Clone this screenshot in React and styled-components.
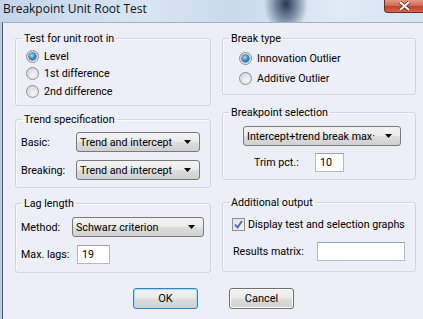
import styled, { createGlobalStyle } from "styled-components";

const GlobalStyle = createGlobalStyle`
  html, body {
    margin: 0;
    padding: 0;
  }
  body {
    width: 423px;
    height: 319px;
    overflow: hidden;
    background: #eceef8;
    font-family: Roboto, "Liberation Sans", sans-serif;
    font-size: 10.7px;
    color: #000;
  }
`;

const Window = styled.div`
  width: 423px;
  height: 319px;
  display: flex;
  flex-direction: column;
  background: linear-gradient(90deg, #b9cbe2 0%, #d3e1f1 50%, #dbe7f4 100%);
`;

const TitleBar = styled.div`
  height: 22px;
  flex: none;
  display: flex;
  align-items: flex-start;
  justify-content: space-between;
  background-color: #d3e1f1;
  background-image: radial-gradient(
      22px 30px at 286px 4px,
      rgba(30, 46, 72, 0.95) 0%,
      rgba(60, 80, 110, 0.6) 50%,
      rgba(60, 80, 110, 0) 100%
    ),
    linear-gradient(90deg, #c4d5ea 0%, #d8e5f3 35%, #c9d9ec 55%, #dfeaf6 80%, #d6e3f2 100%);
`;

const Title = styled.span`
  font-family: "Open Sans", "Noto Sans", sans-serif;
  font-size: 12px;
  line-height: 16px;
  padding: 1px 0 0 3px;
  color: #111;
`;

const CloseButton = styled.div`
  width: 39px;
  height: 13px;
  box-sizing: border-box;
  border: 1px solid #6e2c22;
  border-top: none;
  border-right: none;
  border-radius: 0 0 0 4px;
  background: linear-gradient(#e39a88 0%, #d66b55 45%, #c1412b 55%, #d8664c 100%);
  display: flex;
  align-items: center;
  justify-content: center;
`;

const Client = styled.div`
  flex: 1;
  margin-left: 2px;
  border-left: 1px solid #4f5866;
  border-top: 1px solid #a7b0bc;
  background: #eceef8;
  padding: 9px 7px 0 12px;
  display: flex;
  flex-direction: column;
`;

const Columns = styled.div`
  display: flex;
  gap: 11px;
`;

const Column = styled.div`
  width: ${(p) => p.w}px;
  display: flex;
  flex-direction: column;
`;

const Group = styled.fieldset`
  box-sizing: border-box;
  height: ${(p) => p.h}px;
  margin: ${(p) => p.mt || 0}px 0 0 0;
  padding: 0;
  border: 1px solid #d1d6df;
  border-radius: 3px;
  box-shadow: inset 1px 1px 0 #fafbff;
  min-width: 0;
`;

const Legend = styled.legend`
  margin-left: 6px;
  padding: 0 2px;
  font-size: 10.7px;
  line-height: 13px;
`;

const Body = styled.div`
  display: flex;
  flex-direction: column;
  padding: ${(p) => p.pt}px 0 0 ${(p) => p.pl}px;
  gap: ${(p) => p.gap || 0}px;
`;

const Row = styled.div`
  display: flex;
  align-items: center;
  height: ${(p) => p.h}px;
  gap: ${(p) => p.gap || 0}px;
  padding-left: ${(p) => p.indent || 0}px;
`;

const Label = styled.span`
  width: ${(p) => (p.w ? `${p.w}px` : "auto")};
  flex: none;
  white-space: nowrap;
`;

const RadioCircle = styled.span`
  width: 13px;
  height: 13px;
  box-sizing: border-box;
  border-radius: 50%;
  border: 1px solid #8c8f94;
  background: radial-gradient(circle at 60% 65%, #f6f6f6 0%, #dcdee2 60%, #cfd2d6 100%);
  display: flex;
  align-items: center;
  justify-content: center;
  flex: none;

  &::after {
    content: "";
    display: ${(p) => (p.checked ? "block" : "none")};
    width: 7px;
    height: 7px;
    border-radius: 50%;
    background: radial-gradient(circle at 40% 35%, #a8e2ff 0%, #3d93d4 45%, #123e6e 100%);
    box-shadow: 0 0 0 0.5px #1b3c62;
  }
`;

const CheckBox = styled.span`
  width: 13px;
  height: 13px;
  box-sizing: border-box;
  border: 1px solid #8c8f94;
  background: linear-gradient(135deg, #dfe1e5 0%, #f4f4f6 100%);
  display: flex;
  align-items: center;
  justify-content: center;
  flex: none;
`;

const Select = styled.div`
  box-sizing: border-box;
  width: ${(p) => p.w}px;
  height: 20px;
  border: 1px solid #7a7a7a;
  border-radius: 3px;
  background: linear-gradient(#f3f3f3 0%, #ebebeb 48%, #dddddd 52%, #d0d0d0 100%);
  display: flex;
  align-items: center;
  padding: 0 8px 0 3px;
  gap: 4px;
  flex: none;
`;

const SelectText = styled.span`
  flex: 1;
  white-space: nowrap;
`;

const Input = styled.div`
  box-sizing: border-box;
  width: ${(p) => p.w}px;
  height: 19px;
  background: #fff;
  border: 1px solid #b5b9c1;
  border-top-color: #9ea3ab;
  display: flex;
  align-items: center;
  padding-left: 4px;
  flex: none;
`;

const ButtonBar = styled.div`
  display: flex;
  justify-content: center;
  gap: 31px;
  margin-top: 15px;
  padding-right: 4px;
`;

const Button = styled.button`
  box-sizing: border-box;
  width: 65px;
  height: 21px;
  font-family: inherit;
  font-size: 11px;
  color: #000;
  padding: 0;
  border-radius: 3px;
  border: 1px solid ${(p) => (p.primary ? "#3c7fb1" : "#707070")};
  box-shadow: ${(p) => (p.primary ? "inset 0 0 0 1px #a6ddf6" : "inset 0 0 0 1px #fbfbfb")};
  background: linear-gradient(#f2f2f2 0%, #ebebeb 48%, #dddddd 52%, #cfcfcf 100%);
`;

const Arrow = () => (
  <svg width="7" height="4" viewBox="0 0 7 4">
    <path d="M0 0h7L3.5 4z" fill="#000" />
  </svg>
);

function Radio({ checked, label, gap }) {
  return (
    <Row h={gap} gap={5}>
      <RadioCircle checked={checked} />
      <Label>{label}</Label>
    </Row>
  );
}

function Dropdown({ w, children }) {
  return (
    <Select w={w}>
      <SelectText>{children}</SelectText>
      <Arrow />
    </Select>
  );
}

export default function App() {
  return (
    <>
      <GlobalStyle />
      <Window>
        <TitleBar>
          <Title>Breakpoint Unit Root Test</Title>
          <CloseButton>
            <svg width="13" height="10" viewBox="0 0 13 10">
              <path
                d="M2 1l4.5 4L2 9M11 1L6.5 5 11 9"
                stroke="#5a2018"
                strokeWidth="3.4"
                fill="none"
              />
              <path
                d="M2 1l4.5 4L2 9M11 1L6.5 5 11 9"
                stroke="#fff"
                strokeWidth="2"
                fill="none"
              />
            </svg>
          </CloseButton>
        </TitleBar>
        <Client>
          <Columns>
            <Column w={196}>
              <Group h={74}>
                <Legend>Test for unit root in</Legend>
                <Body pt={2.5} pl={10}>
                  <Radio checked label="Level" gap={17.5} />
                  <Radio label="1st difference" gap={17.5} />
                  <Radio label="2nd difference" gap={17.5} />
                </Body>
              </Group>
              <Group h={75} mt={7}>
                <Legend>Trend specification</Legend>
                <Body pt={6} pl={5} gap={8}>
                  <Row h={20}>
                    <Label w={55}>Basic:</Label>
                    <Dropdown w={124}>Trend and intercept</Dropdown>
                  </Row>
                  <Row h={20}>
                    <Label w={55}>Breaking:</Label>
                    <Dropdown w={124}>Trend and intercept</Dropdown>
                  </Row>
                </Body>
              </Group>
              <Group h={76} mt={9}>
                <Legend>Lag length</Legend>
                <Body pt={7} pl={5} gap={8}>
                  <Row h={20}>
                    <Label w={51}>Method:</Label>
                    <Dropdown w={132}>Schwarz criterion</Dropdown>
                  </Row>
                  <Row h={19}>
                    <Label w={56}>Max. lags:</Label>
                    <Input w={33}>19</Input>
                  </Row>
                </Body>
              </Group>
            </Column>
            <Column w={194}>
              <Group h={63}>
                <Legend>Break type</Legend>
                <Body pt={3} pl={16}>
                  <Radio checked label="Innovation Outlier" gap={20} />
                  <Radio label="Additive Outlier" gap={20} />
                </Body>
              </Group>
              <Group h={74} mt={11}>
                <Legend>Breakpoint selection</Legend>
                <Body pt={7} pl={20} gap={7}>
                  <Row h={20}>
                    <Dropdown w={158}>Intercept+trend break max·</Dropdown>
                  </Row>
                  <Row h={19} indent={11}>
                    <Label w={61}>Trim pct.:</Label>
                    <Input w={29}>10</Input>
                  </Row>
                </Body>
              </Group>
              <Group h={76} mt={16}>
                <Legend>Additional output</Legend>
                <Body pt={7} pl={9} gap={10}>
                  <Row h={16} gap={3}>
                    <CheckBox>
                      <svg width="9" height="9" viewBox="0 0 9 9">
                        <path
                          d="M1 4.5l2.5 3L8 1"
                          stroke="#4a64a8"
                          strokeWidth="1.8"
                          fill="none"
                        />
                      </svg>
                    </CheckBox>
                    <Label>Display test and selection graphs</Label>
                  </Row>
                  <Row h={19} indent={1}>
                    <Label w={84}>Results matrix:</Label>
                    <Input w={88} />
                  </Row>
                </Body>
              </Group>
            </Column>
          </Columns>
          <ButtonBar>
            <Button primary>OK</Button>
            <Button>Cancel</Button>
          </ButtonBar>
        </Client>
      </Window>
    </>
  );
}
